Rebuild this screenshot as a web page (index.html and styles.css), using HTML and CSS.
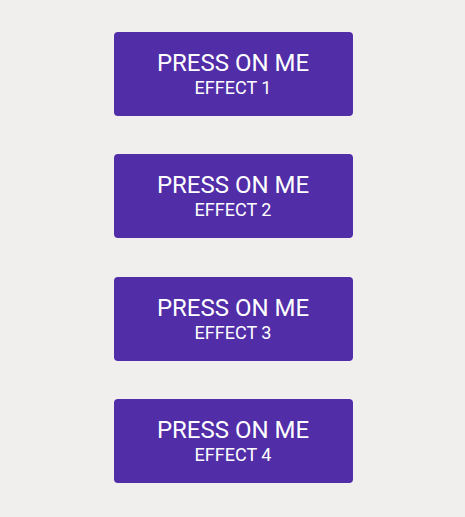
FILE: index.html
```html
<!DOCTYPE html>
<html>
<head>
<meta charset="utf-8">
<link rel="stylesheet" href="styles.css">
</head>
<body>
<div class="list">
  <button class="btn"><span class="title">PRESS ON ME</span><span class="sub">EFFECT 1</span></button>
  <button class="btn"><span class="title">PRESS ON ME</span><span class="sub">EFFECT 2</span></button>
  <button class="btn"><span class="title">PRESS ON ME</span><span class="sub">EFFECT 3</span></button>
  <button class="btn"><span class="title">PRESS ON ME</span><span class="sub">EFFECT 4</span></button>
</div>
</body>
</html>
```
FILE: styles.css
```css
html, body {
  margin: 0;
  padding: 0;
  background: #f1efed;
  font-family: Roboto, "Liberation Sans", sans-serif;
}
.list {
  display: flex;
  flex-direction: column;
  align-items: center;
  padding: 32px 0 0 1px;
  gap: 38.33px;
}
.btn {
  width: 239px;
  height: 84px;
  border: none;
  border-radius: 4px;
  background: #512da8;
  color: #ffffff;
  font-family: Roboto, "Liberation Sans", sans-serif;
  display: flex;
  flex-direction: column;
  align-items: center;
  justify-content: center;
  padding: 0;
}
.title {
  font-size: 24px;
  line-height: 26px;
  font-weight: 400;
}
.sub {
  margin-top: 2px;
  font-size: 18px;
  line-height: 20px;
  font-weight: 400;
}
```
